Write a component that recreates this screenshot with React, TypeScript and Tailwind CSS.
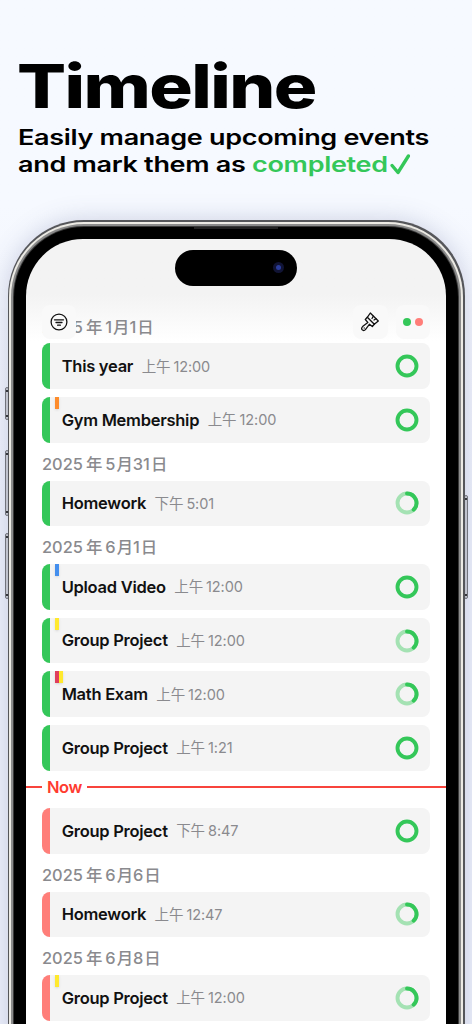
import { ReactNode } from 'react';
import clsx from 'clsx';

interface Evento {
    titulo: string
    periodo: string
    hora: string
    concluido?: boolean
    passado?: boolean
    tags?: string[]
}

interface Dia {
    data: string[]
    eventos: Evento[]
}

const diasPassados: Dia[] = [
    {
        data: ['2025', '年', '1', '月', '1', '日'],
        eventos: [
            { titulo: 'This year', periodo: '上午', hora: '12:00', concluido: true, passado: true },
            { titulo: 'Gym Membership', periodo: '上午', hora: '12:00', concluido: true, passado: true, tags: ['bg-[#fd8c2c]'] },
        ],
    },
    {
        data: ['2025', '年', '5', '月', '31', '日'],
        eventos: [
            { titulo: 'Homework', periodo: '下午', hora: '5:01', passado: true },
        ],
    },
    {
        data: ['2025', '年', '6', '月', '1', '日'],
        eventos: [
            { titulo: 'Upload Video', periodo: '上午', hora: '12:00', concluido: true, passado: true, tags: ['bg-[#448fee]'] },
            { titulo: 'Group Project', periodo: '上午', hora: '12:00', passado: true, tags: ['bg-[#ffe92e]'] },
            { titulo: 'Math Exam', periodo: '上午', hora: '12:00', passado: true, tags: ['bg-[#e03e5c]', 'bg-[#ffe92e]'] },
            { titulo: 'Group Project', periodo: '上午', hora: '1:21', concluido: true, passado: true },
        ],
    },
]

const eventosHoje: Evento[] = [
    { titulo: 'Group Project', periodo: '下午', hora: '8:47', concluido: true },
]

const diasFuturos: Dia[] = [
    {
        data: ['2025', '年', '6', '月', '6', '日'],
        eventos: [
            { titulo: 'Homework', periodo: '上午', hora: '12:47' },
        ],
    },
    {
        data: ['2025', '年', '6', '月', '8', '日'],
        eventos: [
            { titulo: 'Group Project', periodo: '上午', hora: '12:00', tags: ['bg-[#ffe92e]'] },
        ],
    },
]

function Progresso({ concluido }: { concluido?: boolean }) {
    return (
        <svg width="24" height="24" viewBox="0 0 24 24" fill="none" stroke="#34c759" strokeWidth="3.9">
            <circle cx="12" cy="12" r="9.5" opacity={concluido ? 1 : 0.42} />
            {!concluido && <path d="M12 2.5A9.5 9.5 0 0 1 18.7 18.7" strokeLinecap="round" />}
        </svg>
    )
}

function CartaoEvento({ evento }: { evento: Evento }) {
    return (
        <div className="relative flex h-[45.7px] shrink-0 items-center overflow-hidden rounded-lg bg-[#f4f4f4] pr-[11px]">
            <div className={clsx('h-full w-2', evento.passado ? 'bg-[#34c759]' : 'bg-[#ff7e79]')} />
            <div className="absolute left-[13.5px] top-0 flex shadow-sm">
                {evento.tags?.map((cor) => (
                    <span key={cor} className={clsx('h-3 w-1', cor)} />
                ))}
            </div>
            <span className="ml-[11.7px] mt-[0.4px] text-[16.5px] font-semibold tracking-[-0.27px] text-[#111]">{evento.titulo}</span>
            <span className="ml-[8.500px] mt-[0.4px] text-[14.5px] tracking-[-0.1px] text-[#8a8a8e]">
                {evento.periodo}
                <span className="ml-[3px]">{evento.hora}</span>
            </span>
            <div className="ml-auto">
                <Progresso concluido={evento.concluido} />
            </div>
        </div>
    )
}

function TituloDia({ data }: { data: string[] }) {
    const [ano, anoLabel, mes, mesLabel, dia, diaLabel] = data

    return (
        <h2 className="flex h-[37.8px] shrink-0 items-center pt-[5px] text-[16.4px] font-medium text-[#8a8a8e]">
            <span>{ano}</span>
            <span className="ml-[3px]">{anoLabel}</span>
            <span className="ml-[3px]">{mes}</span>
            <span className="ml-px">{mesLabel}</span>
            <span>{dia}</span>
            <span className="ml-px">{diaLabel}</span>
        </h2>
    )
}

function SecaoDia({ dia }: { dia: Dia }) {
    return (
        <section>
            <TituloDia data={dia.data} />
            <div className="flex flex-col gap-2">
                {dia.eventos.map((evento, i) => (
                    <CartaoEvento key={i} evento={evento} />
                ))}
            </div>
        </section>
    )
}

function BotaoBarra({ children }: { children: ReactNode }) {
    return (
        <button className="flex size-[34.5px] items-center justify-center gap-1 rounded-lg bg-[#f9f9f9]">
            {children}
        </button>
    )
}

function BarraFerramentas() {
    return (
        <div className="absolute left-[15.5px] right-[16px] top-[66px] flex">
            <BotaoBarra>
                <svg width="18" height="18" viewBox="0 0 18 18" fill="none" stroke="#111" strokeWidth="1.3" strokeLinecap="round">
                    <circle cx="9" cy="9" r="7.9" />
                    <path d="M4.5 6.8h9M6 9.5h6M7.6 12.2h2.8" />
                </svg>
            </BotaoBarra>
            <div className="ml-auto flex gap-2">
                <BotaoBarra>
                    <svg width="20" height="20" viewBox="0 0 20 20" fill="none" stroke="#111" strokeWidth="1.3" strokeLinejoin="round" strokeLinecap="round">
                        <path d="M10.3 1L18.3 9L14.3 12.3L7.3 5.3Z" />
                        <path d="M13.3 4.2l-1.3 2.3M16 6.7l-2 1.3" />
                        <path d="M7.3 5.3L5.3 7.5L7.8 10.4L2.6 14.6C.2 17 3.2 20 5.4 17.6L9.5 12.2L12.3 14.5L14.3 12.3" />
                        <path d="M4.2 16v.1" />
                    </svg>
                </BotaoBarra>
                <BotaoBarra>
                    <span className="size-2 rounded-full bg-[#34c759]" />
                    <span className="size-2 rounded-full bg-[#ff7e79]" />
                </BotaoBarra>
            </div>
        </div>
    )
}

function LinhaAgora() {
    return (
        <div className="-ml-[15.5px] -mr-[16px] flex h-[37.3px] items-center pb-[4px] text-[16.5px] font-semibold text-[#ff3b30]">
            <span className="h-[2px] w-[15.5px] bg-[#f8443c]" />
            <span className="ml-[5px] mr-[5px] tracking-[-0.4px]">Now</span>
            <span className="h-[2px] flex-1 bg-[#f8443c]" />
        </div>
    )
}

function BotaoLateral({ className }: { className: string }) {
    return (
        <div className={clsx('absolute flex w-1 flex-col justify-between rounded-xs border border-[#77787c] bg-[#d0d1d8] py-[2px]', className)}>
            <span className="h-[2px] bg-[#333]" />
            <span className="h-[2px] bg-[#333]" />
        </div>
    )
}

function Telefone() {
    return (
        <div className="relative ml-[8px] mt-[43.4px] h-[900px] w-[456.5px]">
            <BotaoLateral className="-left-[3.5px] top-[167px] h-[33px]" />
            <BotaoLateral className="-left-[3px] top-[230px] h-[66px]" />
            <BotaoLateral className="-left-[3px] top-[313px] h-[66px]" />
            <BotaoLateral className="-right-[3px] top-[275px] h-[104px]" />
            <div className="relative h-full rounded-t-[76px] bg-[#55565a] p-[1.2px] pb-0 shadow-[0_0_24px_rgba(80,90,140,0.25)]">
                <div className="h-full rounded-t-[75px] bg-[#eceae4] p-[2px] pb-0">
                    <div className="h-full rounded-t-[73px] bg-[#8b8b8b] p-[2px] pb-0">
                        <div className="h-full rounded-t-[71px] bg-[#3a3a3a] p-[1px] pb-0">
                            <div className="h-full rounded-t-[70px] bg-black px-[12.3px] pt-[12.3px]">
                                <Tela />
                            </div>
                        </div>
                    </div>
                </div>
            </div>
            <div className="absolute left-[186px] top-[7px] h-[2px] w-[84px] bg-[#222]" />
        </div>
    )
}

function Tela() {
    return (
        <div className="relative h-full overflow-hidden rounded-t-[57px] bg-linear-to-b from-[#f3f3f3] from-[55px] to-white to-[102px] pl-[15.5px] pr-[16px] pt-[66.7px]">
            <div className="absolute left-1/2 top-[11px] flex h-[36px] w-[122px] -translate-x-1/2 items-center justify-end rounded-full bg-black pr-[13px]">
                <div className="flex size-[11px] items-center justify-center rounded-full bg-[#111435]">
                    <span className="size-[5px] rounded-full bg-[#2b3d9c]" />
                </div>
            </div>
            {diasPassados.map((dia, i) => (
                <SecaoDia key={i} dia={dia} />
            ))}
            <LinhaAgora />
            {eventosHoje.map((evento, i) => (
                <CartaoEvento key={i} evento={evento} />
            ))}
            {diasFuturos.map((dia, i) => (
                <SecaoDia key={i} dia={dia} />
            ))}
            <BarraFerramentas />
        </div>
    )
}

function App() {
    return (
        <div className="h-[1024px] w-[472px] overflow-hidden bg-linear-to-b from-[#f6f9ff] from-20% to-[#eef1fc] to-50% font-[Inter,'Noto_Sans_CJK_SC',sans-serif]">
            <header className="h-[177px] pl-[18px] pt-[50px] text-black">
                <h1 className="-ml-px w-max origin-left scale-x-[1.21] text-[60px] font-extrabold leading-[72px] tracking-[-1.3px]">Timeline</h1>
                <p className="mt-[1.5px] w-max origin-left scale-x-[1.257] text-[21.5px] font-semibold leading-[27px] tracking-[-0.25px]">Easily manage upcoming events</p>
                <p className="flex w-max origin-left scale-x-[1.257] items-center text-[21.5px] font-semibold leading-[27px] tracking-[-0.25px]">
                    and mark them as&nbsp;
                    <span className="text-[#34c759]">completed</span>
                    <svg className="ml-[2px]" width="16" height="21" viewBox="0 0 20.3 21" preserveAspectRatio="none" fill="none" stroke="#34c759" strokeWidth="3.4" strokeLinecap="round" strokeLinejoin="round">
                        <path d="M2 11.5l6 7L18.5 2" />
                    </svg>
                </p>
            </header>
            <Telefone />
        </div>
    )
}

export default App;
